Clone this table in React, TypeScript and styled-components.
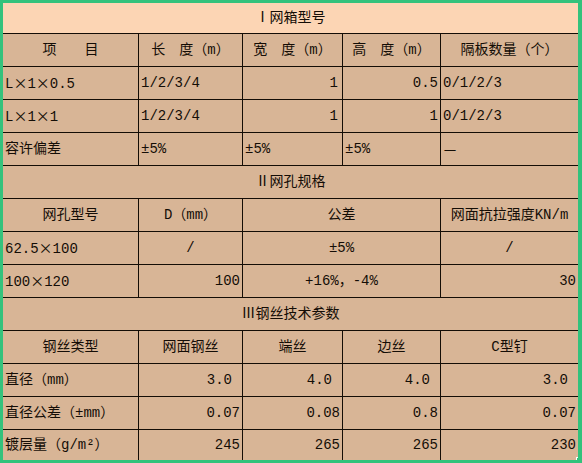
import React from 'react';
import styled, { createGlobalStyle } from 'styled-components';

const GlobalStyle = createGlobalStyle`
  html, body {
    margin: 0;
    padding: 0;
    background: #ffffff;
  }
`;

const Frame = styled.div`
  position: relative;
  box-sizing: border-box;
  width: 582px;
  height: 463px;
  border-style: solid;
  border-color: #33c27c;
  border-width: 3px 4px 3px 3px;
  background: #d8b596;
  overflow: hidden;
`;

const Sheet = styled.table`
  width: 575px;
  border-collapse: separate;
  border-spacing: 0;
  table-layout: fixed;
  font-family: "Liberation Mono", "Noto Sans CJK SC", monospace;
  font-size: 14px;
  color: #140d06;
`;

const Col = styled.col<{ $w: number }>`
  width: ${({ $w }) => $w}px;
`;

const Row = styled.tr<{ $h: number }>`
  height: ${({ $h }) => $h}px;
`;

const Cell = styled.td<{
  $align?: 'left' | 'center' | 'right';
  $last?: boolean;
  $bottom?: boolean;
  $pr?: number;
  $peach?: boolean;
}>`
  box-sizing: border-box;
  padding: 0 ${({ $pr }) => $pr ?? 2}px 0 2px;
  text-align: ${({ $align }) => $align || 'left'};
  vertical-align: middle;
  white-space: nowrap;
  overflow: hidden;
  line-height: 16px;
  border-right: ${({ $last }) => ($last ? 'none' : '1px solid #140d06')};
  border-bottom: ${({ $bottom }) => ($bottom === false ? 'none' : '1px solid #140d06')};
  background: ${({ $peach }) => ($peach ? '#fcd5b4' : 'transparent')};
`;

// full-width signs such as × and — in the original sheet font
const Wide = styled.span`
  display: inline-block;
  width: 1em;
  text-align: center;
  font-family: "Noto Sans CJK SC", sans-serif;
`;

const Handle = styled.div`
  position: absolute;
  right: -4px;
  bottom: -3px;
  width: 4px;
  height: 4px;
  border: 1px solid #ffffff;
  background: #33c27c;
`;

type Align = 'left' | 'center' | 'right';
type C = { t: string; a?: Align; pr?: number };

const widths = [136, 104, 100, 98, 137];

const sections: { title: string; peach?: boolean; rows: C[][] }[] = [
  {
    title: 'Ⅰ网箱型号',
    peach: true,
    rows: [
      [
        { t: '项　　目', a: 'center' },
        { t: '长　度（m）', a: 'center' },
        { t: '宽　度（m）', a: 'center' },
        { t: '高　度（m）', a: 'center' },
        { t: '隔板数量（个）', a: 'center' },
      ],
      [
        { t: 'L×1×0.5' },
        { t: '1/2/3/4' },
        { t: '1', a: 'right', pr: 4 },
        { t: '0.5', a: 'right' },
        { t: '0/1/2/3' },
      ],
      [
        { t: 'L×1×1' },
        { t: '1/2/3/4' },
        { t: '1', a: 'right', pr: 4 },
        { t: '1', a: 'right' },
        { t: '0/1/2/3' },
      ],
      [{ t: '容许偏差' }, { t: '±5%' }, { t: '±5%' }, { t: '±5%' }, { t: '—' }],
    ],
  },
  {
    title: 'Ⅱ网孔规格',
    rows: [
      [
        { t: '网孔型号', a: 'center' },
        { t: 'D（mm）', a: 'center' },
        { t: '公差', a: 'center' },
        { t: '网面抗拉强度KN/m', a: 'center' },
      ],
      [{ t: '62.5×100' }, { t: '/', a: 'center' }, { t: '±5%', a: 'center' }, { t: '/', a: 'center' }],
      [{ t: '100×120' }, { t: '100', a: 'right' }, { t: '+16%，-4%', a: 'center' }, { t: '30', a: 'right' }],
    ],
  },
  {
    title: 'Ⅲ钢丝技术参数',
    rows: [
      [
        { t: '钢丝类型', a: 'center' },
        { t: '网面钢丝', a: 'center' },
        { t: '端丝', a: 'center' },
        { t: '边丝', a: 'center' },
        { t: 'C型钉', a: 'center' },
      ],
      [
        { t: '直径（mm）' },
        { t: '3.0', a: 'right', pr: 10 },
        { t: '4.0', a: 'right', pr: 10 },
        { t: '4.0', a: 'right', pr: 10 },
        { t: '3.0', a: 'right', pr: 10 },
      ],
      [
        { t: '直径公差（±mm）' },
        { t: '0.07', a: 'right' },
        { t: '0.08', a: 'right' },
        { t: '0.8', a: 'right' },
        { t: '0.07', a: 'right' },
      ],
      [
        { t: '镀层量（g/m²）' },
        { t: '245', a: 'right' },
        { t: '265', a: 'right' },
        { t: '265', a: 'right' },
        { t: '230', a: 'right' },
      ],
    ],
  },
];

// split text so that × and — get a full-width box
const renderText = (text: string) =>
  text.split(/([×—])/).map((part, i) =>
    part === '×' || part === '—' ? <Wide key={i}>{part}</Wide> : part
  );

const App: React.FC = () => {
  const total = sections.reduce((n, s) => n + s.rows.length + 1, 0);
  let index = 0;

  return (
    <>
      <GlobalStyle />
      <Frame>
        <Sheet>
          <colgroup>
            {widths.map((w, i) => (
              <Col key={i} $w={w} />
            ))}
          </colgroup>
          <tbody>
            {sections.map((s) => {
              const titleIdx = index++;
              return (
                <React.Fragment key={s.title}>
                  <Row $h={titleIdx === 0 ? 31 : 33}>
                    <Cell colSpan={5} $align="center" $last $peach={s.peach}>
                      {s.title}
                    </Cell>
                  </Row>
                  {s.rows.map((r, ri) => {
                    const rowIdx = index++;
                    const isLast = rowIdx === total - 1;
                    return (
                      <Row key={ri} $h={isLast ? 30 : 33}>
                        {r.map((c, ci) => {
                          // the 4-cell rows let the tolerance column span two
                          const span = r.length === 4 && ci === 2 ? 2 : 1;
                          return (
                            <Cell
                              key={ci}
                              colSpan={span}
                              $align={c.a}
                              $pr={c.pr}
                              $last={ci === r.length - 1}
                              $bottom={!isLast}
                            >
                              {renderText(c.t)}
                            </Cell>
                          );
                        })}
                      </Row>
                    );
                  })}
                </React.Fragment>
              );
            })}
          </tbody>
        </Sheet>
        <Handle />
      </Frame>
    </>
  );
};

export default App;
